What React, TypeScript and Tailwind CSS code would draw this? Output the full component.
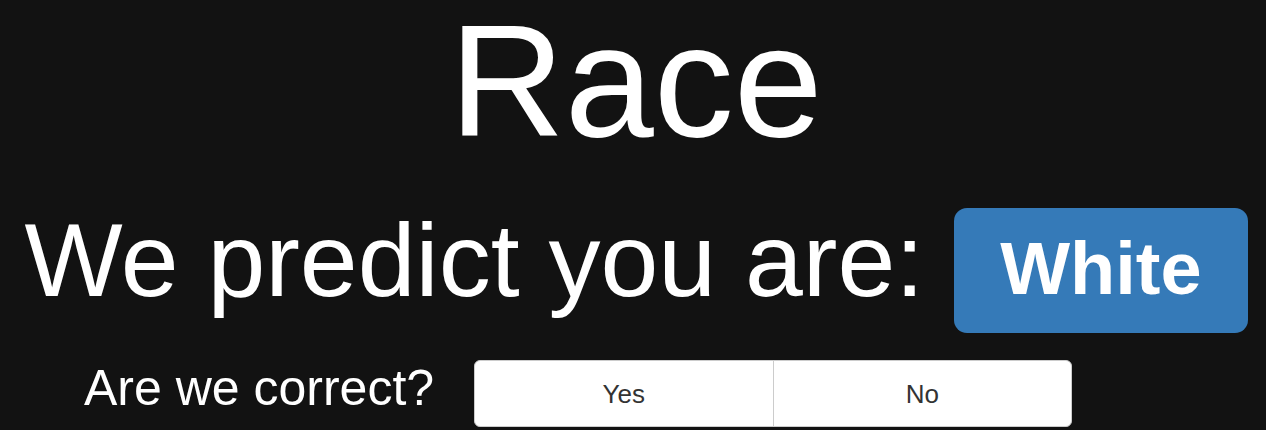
export default function App() {
  const choices = ['Yes', 'No']

  return (
    <div className="min-h-[430px] w-full bg-[#121212] text-white font-['Liberation_Sans',Arial,sans-serif] overflow-hidden">
      {/* Title */}
      <h1 className="-mt-[9px] pl-[6px] text-center text-[160px] leading-[1.12] font-normal">Race</h1>

      {/* Prediction */}
      <div className="mt-[38px] flex items-start justify-center gap-[30px] pl-[6px]">
        <span className="text-[104px] leading-none">We predict you are:</span>
        <span className="rounded-[13px] bg-[#357ab8] px-[46px] pt-[24px] pb-[27px] text-[74px] font-bold leading-none">
          White
        </span>
      </div>

      {/* Feedback */}
      <div className="mt-[27px] flex items-start pl-[84px]">
        <span className="mt-[3px] w-[390px] text-[50px] leading-none">Are we correct?</span>
        <div className="flex h-[67px] w-[598px] overflow-hidden rounded-[6px] border border-[#cccccc] bg-white">
          {choices.map((c, i) => (
            <button
              key={c}
              className={
                'flex flex-1 items-center justify-center text-[26px] leading-none text-[#333333] ' +
                (i > 0 ? 'border-l border-[#cccccc]' : '')
              }
            >
              {c}
            </button>
          ))}
        </div>
      </div>
    </div>
  )
}
